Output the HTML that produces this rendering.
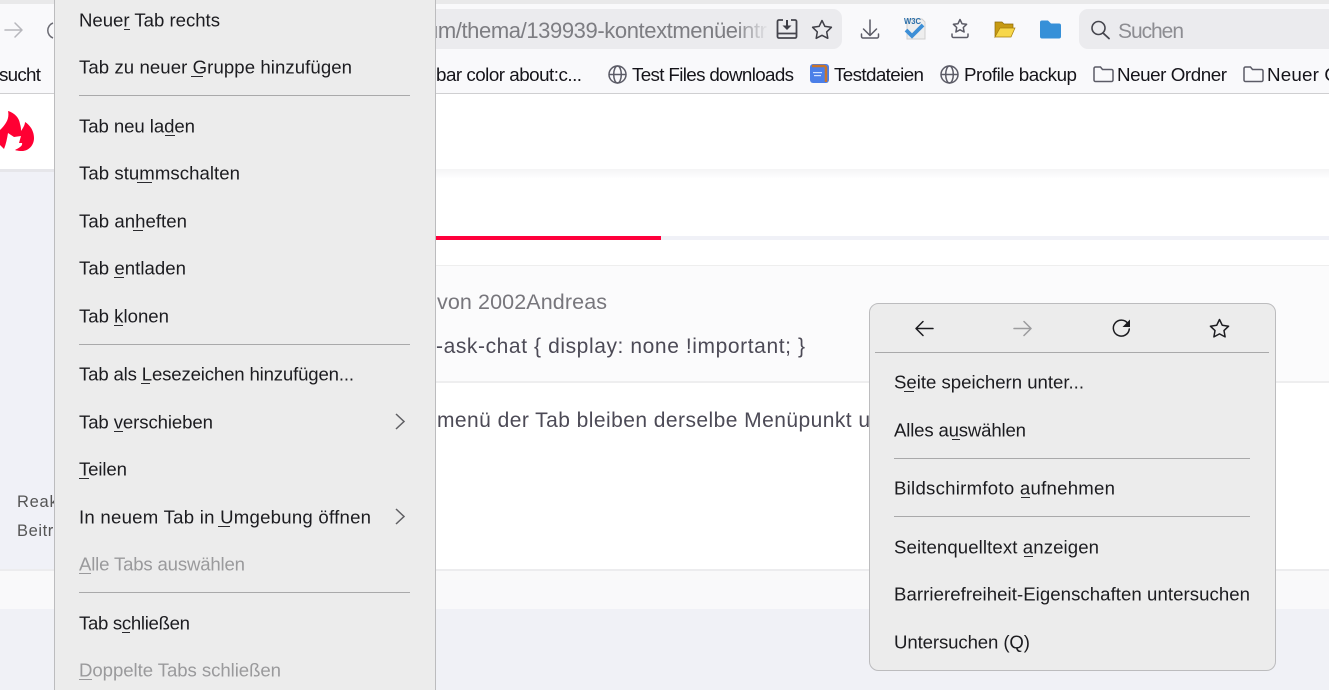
<!DOCTYPE html>
<html lang="de"><head><meta charset="utf-8"><title>Kontextmenü</title>
<style>
html,body{margin:0;padding:0;width:1329px;height:690px;overflow:hidden;background:#fff}
svg{display:block;position:absolute;left:0;top:0}
text{font-family:"Liberation Sans",sans-serif;font-size:18.6px;fill:#1c1c20;white-space:pre}
.d{fill:#9a9a9c}
.b{font-size:18.8px;fill:#15141a}
.q{fill:#4c4a56}
.g{fill:#77767c}
.ic{fill:none;stroke:#5b5b66;stroke-width:1.5;stroke-linecap:round;stroke-linejoin:round}
.mi{fill:none;stroke:#1c1c20;stroke-width:1.5;stroke-linecap:round;stroke-linejoin:round}
</style></head><body>
<svg width="1329" height="690" viewBox="0 0 1329 690" xmlns="http://www.w3.org/2000/svg">
<defs>
<linearGradient id="sh" x1="0" y1="0" x2="0" y2="1"><stop offset="0" stop-color="#f4f4f5"/><stop offset="1" stop-color="#fff"/></linearGradient>
<linearGradient id="fade" x1="0" y1="0" x2="1" y2="0"><stop offset="0" stop-color="#ebebee" stop-opacity="0"/><stop offset="1" stop-color="#ebebee"/></linearGradient>
</defs>
<!-- page -->
<rect width="1329" height="690" fill="#fff"/>
<rect x="0" y="169" width="54" height="401" fill="#f0f1f7"/>
<rect x="0" y="169" width="54" height="3" fill="#e6e6ea"/>
<rect x="436" y="169" width="893" height="10" fill="url(#sh)"/>
<rect x="436" y="236" width="225" height="4" fill="#ff003c"/>
<rect x="661" y="236" width="668" height="4" fill="#f0f1f7"/>
<rect x="436" y="265" width="893" height="116" fill="#fbfbfc"/>
<rect x="436" y="265" width="893" height="1" fill="#eeeeee"/>
<rect x="436" y="381" width="893" height="2" fill="#eeeeef"/>
<rect x="0" y="570" width="1329" height="39" fill="#f9f9fa"/>
<rect x="0" y="569" width="1329" height="2" fill="#ececee"/>
<rect x="0" y="609" width="1329" height="81" fill="#f0f1f6"/>
<text x="437" y="309" class="g" textLength="170" lengthAdjust="spacing" style="font-size:21.5px">von 2002Andreas</text>
<text x="436" y="353" class="q" textLength="369" lengthAdjust="spacing" style="font-size:21px">-ask-chat { display: none !important; }</text>
<text x="437" y="427" class="q" textLength="433" lengthAdjust="spacing" style="font-size:21px">menü der Tab bleiben derselbe Menüpunkt u</text>
<text x="17" y="507" style="font-size:16.5px;fill:#555" textLength="46" lengthAdjust="spacing">Reakt</text>
<text x="17" y="536" style="font-size:16.5px;fill:#555" textLength="46" lengthAdjust="spacing">Beitra</text>
<path d="M8 111C12 112 19 116 20 124C21 127 21 129 21 131C23 128 25 125 25 122C30 125 34 131 34 138C34 146 28 151 22 151C17 151 15 150 15 150C19 148 23 146 22 143L19 143L21 136L14 137L8 133C7 139 6 144 4 149L0 145L0 130C4 126 10 120 8 111z" fill="#ff0033"/>
<!-- toolbar -->
<rect width="1329" height="4" fill="#e9e9ea"/>
<rect y="4" width="1329" height="89" fill="#f9f9fb"/>
<rect y="93" width="1329" height="1" fill="#cfcfd1"/>
<path d="M5 30h17M15 23l7 7-7 7" fill="none" stroke="#b7b7bc" stroke-width="1.5" stroke-linecap="round" stroke-linejoin="round"/>
<path d="M53 23a8 8 0 0 0 0 15" fill="none" stroke="#6a6a72" stroke-width="1.5"/>
<text x="-1" y="81" class="b" textLength="42" lengthAdjust="spacing">sucht</text>
<!-- urlbar -->
<rect x="300" y="9" width="542" height="40" rx="9" fill="#ebebee"/>
<text x="426" y="38" style="font-size:22px;fill:#7d7d82" textLength="341" lengthAdjust="spacing">um/thema/139939-kontextmenüeintr</text>
<rect x="735" y="9" width="34" height="40" fill="url(#fade)"/>
<!-- save page icon -->
<path d="M783 20h-4a1.5 1.5 0 0 0-1.500 1.500v15a1.500 1.500 0 0 0 1.500 1.500h16a1.500 1.500 0 0 0 1.500-1.500v-15a1.500 1.500 0 0 0-1.500-1.500h-4M778 33.500h18" fill="none" stroke="#45454d" stroke-width="1.800"/>
<path d="M787 20v7" stroke="#3e3e46" stroke-width="2" fill="none"/><path d="M782.500 25.500h9l-4.500 4.500z" fill="#3e3e46"/>
<path class="ic" style="stroke:#3e3e46" d="M822 20.500l2.900 5.900 6.500.9-4.700 4.600 1.100 6.400-5.800-3-5.800 3 1.100-6.400-4.700-4.600 6.500-.9z"/>
<!-- download -->
<path class="ic" d="M870 20v15M863.500 29l6.500 6.500 6.500-6.500M861.500 34v2.500a1.500 1.500 0 0 0 1.500 1.500h14a1.500 1.500 0 0 0 1.500-1.500V34"/>
<!-- W3C -->
<path d="M907 19h15l3 3v17h-18z" fill="#eeeeee" stroke="#cfcfcf"/>
<text x="904" y="24" textLength="17" lengthAdjust="spacingAndGlyphs" style="font-size:8.500px;font-weight:bold;fill:#2b6ea8">W3C</text>
<path d="M906 30l6 6 11-11" fill="none" stroke="#3d8fd6" stroke-width="3.800"/>
<!-- star tray -->
<path class="ic" d="M960 19.500l2 4.200 4.600.6-3.300 3.200.8 4.500-4.100-2.200-4.100 2.200.8-4.500-3.300-3.200 4.600-.6zM952 34v2a1.500 1.500 0 0 0 1.500 1.500h13a1.500 1.500 0 0 0 1.500-1.500v-2"/>
<!-- folder open -->
<path d="M995 37V22h7l2 2h9v5h-13l-5 8z" fill="#c79a12" stroke="#8c6a0a" stroke-width=".7"/>
<path d="M995 37l5-9h15l-4 9z" fill="#f7d74a" stroke="#a67d0c" stroke-width=".7"/>
<!-- folder blue -->
<path d="M1040 22.500a2 2 0 0 1 2-2h6l3 3h8a2 2 0 0 1 2 2v11a2 2 0 0 1-2 2h-17a2 2 0 0 1-2-2z" fill="#3690d8"/>
<!-- search -->
<rect x="1079" y="9" width="260" height="40" rx="9" fill="#ebebee"/>
<circle cx="1098.500" cy="28" r="6.500" fill="none" stroke="#45454d" stroke-width="1.600"/>
<path d="M1103 33l6 5.500" stroke="#45454d" stroke-width="1.800" fill="none" stroke-linecap="round"/>
<text x="1118" y="38" style="font-size:21px;fill:#8d8d92" textLength="66" lengthAdjust="spacing">Suchen</text>
<!-- bookmarks -->
<text x="436" y="81" class="b" textLength="146" lengthAdjust="spacing">bar color about:c...</text>
<g fill="none" stroke="#5b5b66" stroke-width="1.500">
<circle cx="617.500" cy="74.500" r="8.500"/><ellipse cx="617.500" cy="74.500" rx="3.800" ry="8.500"/><path d="M609 74.500h17"/>
<circle cx="949.500" cy="74.500" r="8.500"/><ellipse cx="949.500" cy="74.500" rx="3.800" ry="8.500"/><path d="M941 74.500h17"/>
<path d="M1094 68.500a1.500 1.500 0 0 1 1.500-1.500h5l2 2.500h9a1.500 1.500 0 0 1 1.500 1.500v9a1.500 1.500 0 0 1-1.500 1.500h-16a1.500 1.500 0 0 1-1.500-1.500z"/>
<path d="M1244 68.500a1.500 1.500 0 0 1 1.500-1.500h5l2 2.500h9a1.500 1.500 0 0 1 1.500 1.500v9a1.500 1.500 0 0 1-1.500 1.500h-16a1.500 1.500 0 0 1-1.500-1.500z"/>
</g>
<text x="632" y="81" class="b" textLength="162" lengthAdjust="spacing">Test Files downloads</text>
<rect x="810" y="64" width="19" height="19" rx="3" fill="#4b7fe8"/>
<path d="M812 66h12a2 2 0 0 1 2 2v14" fill="none" stroke="#c9742a" stroke-width="2.500"/>
<rect x="813" y="72" width="9" height="1.200" fill="#cfe0ff"/><rect x="814" y="75" width="7" height="1.200" fill="#cfe0ff"/>
<text x="834" y="81" class="b" textLength="90" lengthAdjust="spacing">Testdateien</text>
<text x="964" y="81" class="b" textLength="113" lengthAdjust="spacing">Profile backup</text>
<text x="1117" y="81" class="b" textLength="110" lengthAdjust="spacing">Neuer Ordner</text>
<text x="1267" y="81" class="b" textLength="72" lengthAdjust="spacing">Neuer O</text>
<!-- left menu -->
<rect x="54.500" y="-10" width="381" height="720" fill="#ececec" stroke="#bcbcbe"/>
<g fill="#a9a9aa">
<rect x="79" y="95" width="331" height="1"/><rect x="79" y="344" width="331" height="1"/><rect x="79" y="592" width="331" height="1"/>
</g>
<text x="79" y="26.500" textLength="141" lengthAdjust="spacing">Neuer Tab rechts</text>
<text x="79" y="73.500" textLength="273" lengthAdjust="spacing">Tab zu neuer Gruppe hinzufügen</text>
<text x="79" y="132.500" textLength="116" lengthAdjust="spacing">Tab neu laden</text>
<text x="79" y="179.500" textLength="161" lengthAdjust="spacing">Tab stummschalten</text>
<text x="79" y="227.500" textLength="108" lengthAdjust="spacing">Tab anheften</text>
<text x="79" y="274.500" textLength="107" lengthAdjust="spacing">Tab entladen</text>
<text x="79" y="322.500" textLength="90" lengthAdjust="spacing">Tab klonen</text>
<text x="79" y="380.500" textLength="275" lengthAdjust="spacing">Tab als Lesezeichen hinzufügen...</text>
<text x="79" y="428.500" textLength="134" lengthAdjust="spacing">Tab verschieben</text>
<text x="79" y="475.500" textLength="48" lengthAdjust="spacing">Teilen</text>
<text x="79" y="523.500" textLength="292" lengthAdjust="spacing">In neuem Tab in Umgebung öffnen</text>
<text x="79" y="570.500" class="d" textLength="166" lengthAdjust="spacing">Alle Tabs auswählen</text>
<text x="79" y="629.500" textLength="111" lengthAdjust="spacing">Tab schließen</text>
<text x="79" y="676.500" class="d" textLength="202" lengthAdjust="spacing">Doppelte Tabs schließen</text>
<g fill="#2a2a2e">
<rect x="124" y="29" width="6" height="1"/><rect x="191" y="76" width="12" height="1"/><rect x="165" y="135" width="10" height="1"/>
<rect x="137" y="182" width="15" height="1"/><rect x="133" y="230" width="10" height="1"/><rect x="114" y="277" width="10" height="1"/>
<rect x="114" y="325" width="9" height="1"/><rect x="141" y="383" width="9" height="1"/><rect x="114" y="431" width="9" height="1"/>
<rect x="79" y="478" width="10" height="1"/><rect x="218" y="526" width="12" height="1"/><rect x="122" y="632" width="8" height="1"/>
</g>
<rect x="79" y="573" width="12" height="1" fill="#9a9a9c"/><rect x="79" y="679" width="13" height="1" fill="#9a9a9c"/>
<path d="M396 414l8 7.500-8 7.500M396 509l8 7.500-8 7.500" fill="none" stroke="#5f5f63" stroke-width="1.500"/>
<!-- right menu -->
<rect x="869.500" y="303.500" width="406" height="367" rx="9" fill="#ececec" stroke="#bcbcbe"/>
<g fill="#a9a9aa"><rect x="875" y="352" width="394" height="1"/><rect x="894" y="458" width="356" height="1"/><rect x="894" y="516" width="356" height="1"/></g>
<path class="mi" d="M933 328.500h-17M923 321.500l-7 7 7 7"/>
<path d="M1014 328.500h17M1024 321.500l7 7-7 7" fill="none" stroke="#9c9c9e" stroke-width="1.500" stroke-linecap="round" stroke-linejoin="round"/>
<path class="mi" d="M1127.500 323a8 8 0 1 0 1.800 6"/><path d="M1130 319.500v7.500h-7.500z" fill="#1c1c20"/>
<path class="mi" d="M1219.500 319.500l2.800 5.800 6.300.9-4.600 4.400 1.100 6.300-5.600-3-5.600 3 1.100-6.300-4.600-4.400 6.300-.9z"/>
<text x="894" y="388.500" textLength="190" lengthAdjust="spacing">Seite speichern unter...</text>
<text x="894" y="436.500" textLength="132" lengthAdjust="spacing">Alles auswählen</text>
<text x="894" y="494.500" textLength="221" lengthAdjust="spacing">Bildschirmfoto aufnehmen</text>
<text x="894" y="553.500" textLength="205" lengthAdjust="spacing">Seitenquelltext anzeigen</text>
<text x="894" y="600.500" textLength="356" lengthAdjust="spacing">Barrierefreiheit-Eigenschaften untersuchen</text>
<text x="894" y="648.500" textLength="136" lengthAdjust="spacing">Untersuchen (Q)</text>
<g fill="#2a2a2e">
<rect x="904" y="391" width="10" height="1"/><rect x="952" y="439" width="8" height="1"/><rect x="1021" y="497" width="9" height="1"/><rect x="1024" y="556" width="9" height="1"/>
</g>
</svg>
</body></html>
